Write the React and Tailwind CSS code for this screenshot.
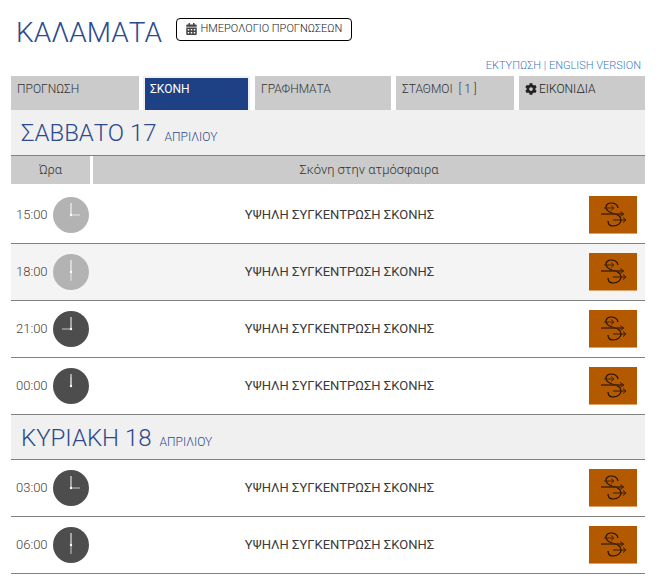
import React from 'react';
import { FaCalendarAlt, FaCog } from 'react-icons/fa';

const font = { fontFamily: 'Roboto, sans-serif' };

function Clock({ hour, dark }) {
  // hour hand angle, minute hand always straight up
  const angle = (hour % 12) * 30;
  return (
    <svg width="36" height="36" viewBox="0 0 36 36" className="shrink-0">
      <circle cx="18" cy="18" r="18" fill={dark ? '#4d4d4d' : '#b3b3b3'} />
      <line x1="18" y1="18" x2="18" y2="6" stroke="#fff" strokeWidth="1" />
      <line x1="18" y1="18" x2="18" y2="9" stroke={dark ? '#c8c8c8' : '#e6e6e6'} strokeWidth="1" transform={`rotate(${angle} 18 18)`} />
      <circle cx="18" cy="18" r="1.2" fill="#fff" />
    </svg>
  );
}

function DustIcon() {
  return (
    <div className="w-12 h-[38px] bg-[#b35900] border-b border-[#d8a468]">
      <svg width="48" height="37" viewBox="0 0 48 37" fill="none" stroke="#1f0f03" strokeWidth="1.2">
        <path d="M29 12c-0.500-3-3-5-7-5-3 0-5 2-5 4 0 3 3 5 6 6 5 1 9 3 9 7 0 3-3 6-8 6-3 0-5-2-5-5" />
        <path d="M15 12h10M22 9.500l3 2.500-3 2.500" stroke="#4a2408" strokeWidth="1" />
        <path d="M12 18h22" strokeWidth="1.500" stroke="#4a2408" />
        <path d="M31 15.500l4 2.500-4 2.500" stroke="#4a2408" strokeWidth="1" />
        <path d="M24 24h13M34 21.500l3 2.500-3 2.500" stroke="#3a1c06" strokeWidth="1" />
      </svg>
    </div>
  );
}

function Row({ time, hour, dark, shaded }) {
  return (
    <div className={`flex items-center h-[57px] border-b border-[#808080] ${shaded ? 'bg-[#f4f4f4]' : 'bg-white'}`}>
      <div className="w-[79px] flex items-center justify-between pl-[5px] pr-px">
        <span className="text-[13px] font-light text-[#444]">{time}</span>
        <Clock hour={hour} dark={dark} />
      </div>
      <div className="flex-1 text-center text-[13px] text-[#3a3a3a]">ΥΨΗΛΗ ΣΥΓΚΕΝΤΡΩΣΗ ΣΚΟΝΗΣ</div>
      <div className="w-[56px] pr-2 flex justify-end">
        <DustIcon />
      </div>
    </div>
  );
}

function DayHeader({ day, num, className }) {
  return (
    <div className={`bg-[#f0f0f0] border-b border-[#808080] flex items-baseline pl-[10px] pt-[5px] text-[#2c4a8c] ${className}`}>
      <span className="text-[24px] font-light">{day} {num}</span>
      <span className="text-[12px] font-light ml-2">ΑΠΡΙΛΙΟΥ</span>
    </div>
  );
}

function Tab({ className, active, children }) {
  return (
    <div className={`h-[34px] text-[12px] ${active ? 'bg-[#1e4085] text-white border-2 border-[#f0f0f0] border-b-0 pl-[5px] pt-[2px]' : 'bg-[#cbcbcb] text-[#333] font-light pl-[6px] pt-[4px]'} ${className}`}>
      {children}
    </div>
  );
}

export default function App() {
  return (
    <div className="w-[670px] h-[577px] overflow-hidden bg-white pl-[11px] pr-[25px]" style={font}>
      <div className="flex items-center h-[58px] pt-[8px]">
        <h1 className="text-[28px] font-light text-[#2c4a8c] ml-[5px]">ΚΑΛΑΜΑΤΑ</h1>
        <button className="ml-[14px] mb-[8px] h-[23px] w-[176px] border border-black rounded-[4px] flex items-center justify-center gap-[4px] text-[11px] font-light text-[#222]">
          <FaCalendarAlt className="w-[11px] h-[12px] text-[#444]" />
          ΗΜΕΡΟΛΟΓΙΟ ΠΡΟΓΝΩΣΕΩΝ
        </button>
      </div>
      <div className="h-[18px] text-right text-[11px] font-light text-[#3b7cc0] pr-1 pt-px leading-[14px]">ΕΚΤΥΠΩΣΗ | ENGLISH VERSION</div>

      <div className="flex">
        <Tab className="w-[128px]">ΠΡΟΓΝΩΣΗ</Tab>
        <Tab active className="w-[107px] ml-1">ΣΚΟΝΗ</Tab>
        <Tab className="w-[136px] ml-[5px]">ΓΡΑΦΗΜΑΤΑ</Tab>
        <Tab className="w-[118px] ml-[5px]">ΣΤΑΘΜΟΙ&nbsp; [ 1 ]</Tab>
        <Tab className="flex-1 ml-[5px]">
          <span className="flex items-center gap-[2px] text-[#222]"><FaCog className="w-[12px] h-[12px] text-[#222]" />ΕΙΚΟΝΙΔΙΑ</span>
        </Tab>
      </div>

      <div>
        <DayHeader day="ΣΑΒΒΑΤΟ" num="17" className="h-[46px]" />
        <div className="flex h-[28px] text-[13px] font-light text-[#333] leading-[28px] text-center">
          <div className="w-[79px] bg-[#cbcbcb]">Ώρα</div>
          <div className="flex-1 ml-[3px] bg-[#cbcbcb]">Σκόνη στην ατμόσφαιρα</div>
        </div>
        <div className="pt-[3px]">
          <Row time="15:00" hour={3} />
        </div>
        <Row time="18:00" hour={6} shaded />
        <Row time="21:00" hour={9} dark />
        <Row time="00:00" hour={0} dark />
        <DayHeader day="ΚΥΡΙΑΚΗ" num="18" className="h-[45px]" />
        <Row time="03:00" hour={3} dark />
        <Row time="06:00" hour={6} dark />
      </div>
    </div>
  );
}
